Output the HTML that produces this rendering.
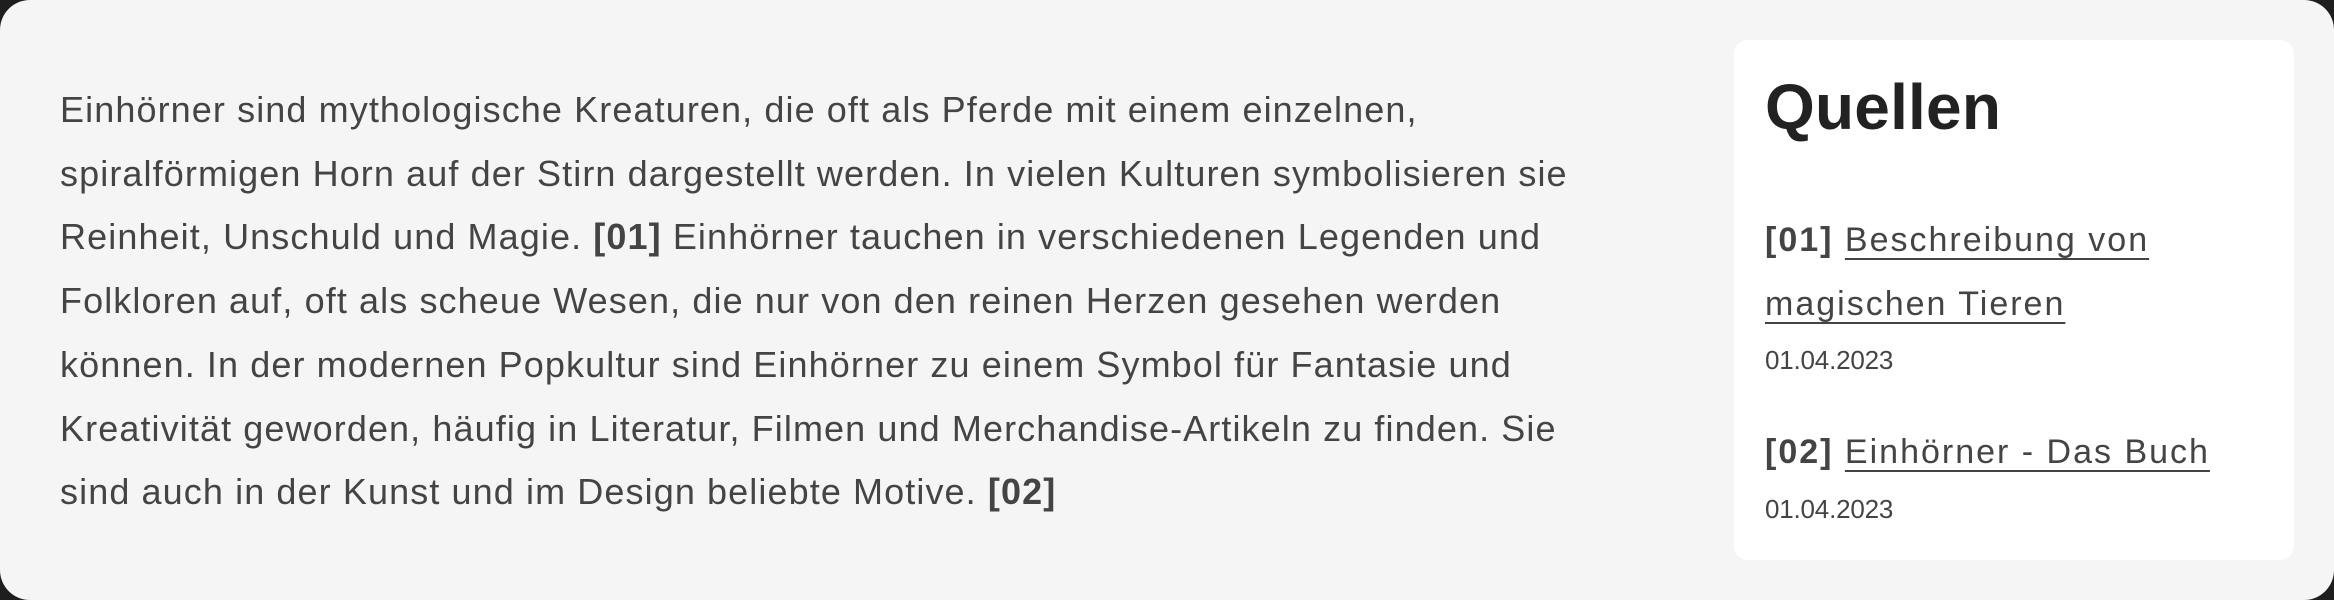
<!DOCTYPE html>
<html><head><meta charset="utf-8"><style>
html,body{margin:0;padding:0;background:#1e1e1e;}
.wrap{position:relative;width:2334px;height:600px;background:#f5f5f5;border-radius:30px;overflow:hidden;font-family:"Liberation Sans",sans-serif;}
.main{position:absolute;left:60px;top:78px;font-size:36px;line-height:63.7px;color:#444;white-space:nowrap;letter-spacing:1.1px;}
.main b{color:#444}
.card{position:absolute;left:1734px;top:40px;width:560px;height:520px;background:#fff;border-radius:14px;}
h1{position:absolute;left:31px;top:30px;margin:0;font-size:64px;font-weight:bold;color:#222;letter-spacing:0.2px}
.src{position:absolute;left:31px;font-size:34px;color:#444;line-height:64px;white-space:nowrap;letter-spacing:2px}
.src a{color:#444;text-decoration:underline;text-underline-offset:7px;text-decoration-thickness:2px}
.date{position:absolute;left:31px;font-size:26px;color:#444;letter-spacing:-0.2px;line-height:30px}
</style></head><body><div class="wrap">
<div class="main">Einhörner sind mythologische Kreaturen, die oft als Pferde mit einem einzelnen,<br>spiralförmigen Horn auf der Stirn dargestellt werden. In vielen Kulturen symbolisieren sie<br>Reinheit, Unschuld und Magie. <b>[01]</b> Einhörner tauchen in verschiedenen Legenden und<br>Folkloren auf, oft als scheue Wesen, die nur von den reinen Herzen gesehen werden<br>können. In der modernen Popkultur sind Einhörner zu einem Symbol für Fantasie und<br>Kreativität geworden, häufig in Literatur, Filmen und Merchandise-Artikeln zu finden. Sie<br>sind auch in der Kunst und im Design beliebte Motive. <b>[02]</b></div>
<div class="card">
<h1>Quellen</h1>
<div class="src" style="top:168px"><b>[01]</b> <a>Beschreibung von</a><br><a>magischen Tieren</a></div>
<div class="date" style="top:305px">01.04.2023</div>
<div class="src" style="top:380px"><b>[02]</b> <a>Einhörner - Das Buch</a></div>
<div class="date" style="top:454px">01.04.2023</div>
</div>
</div></body></html>
